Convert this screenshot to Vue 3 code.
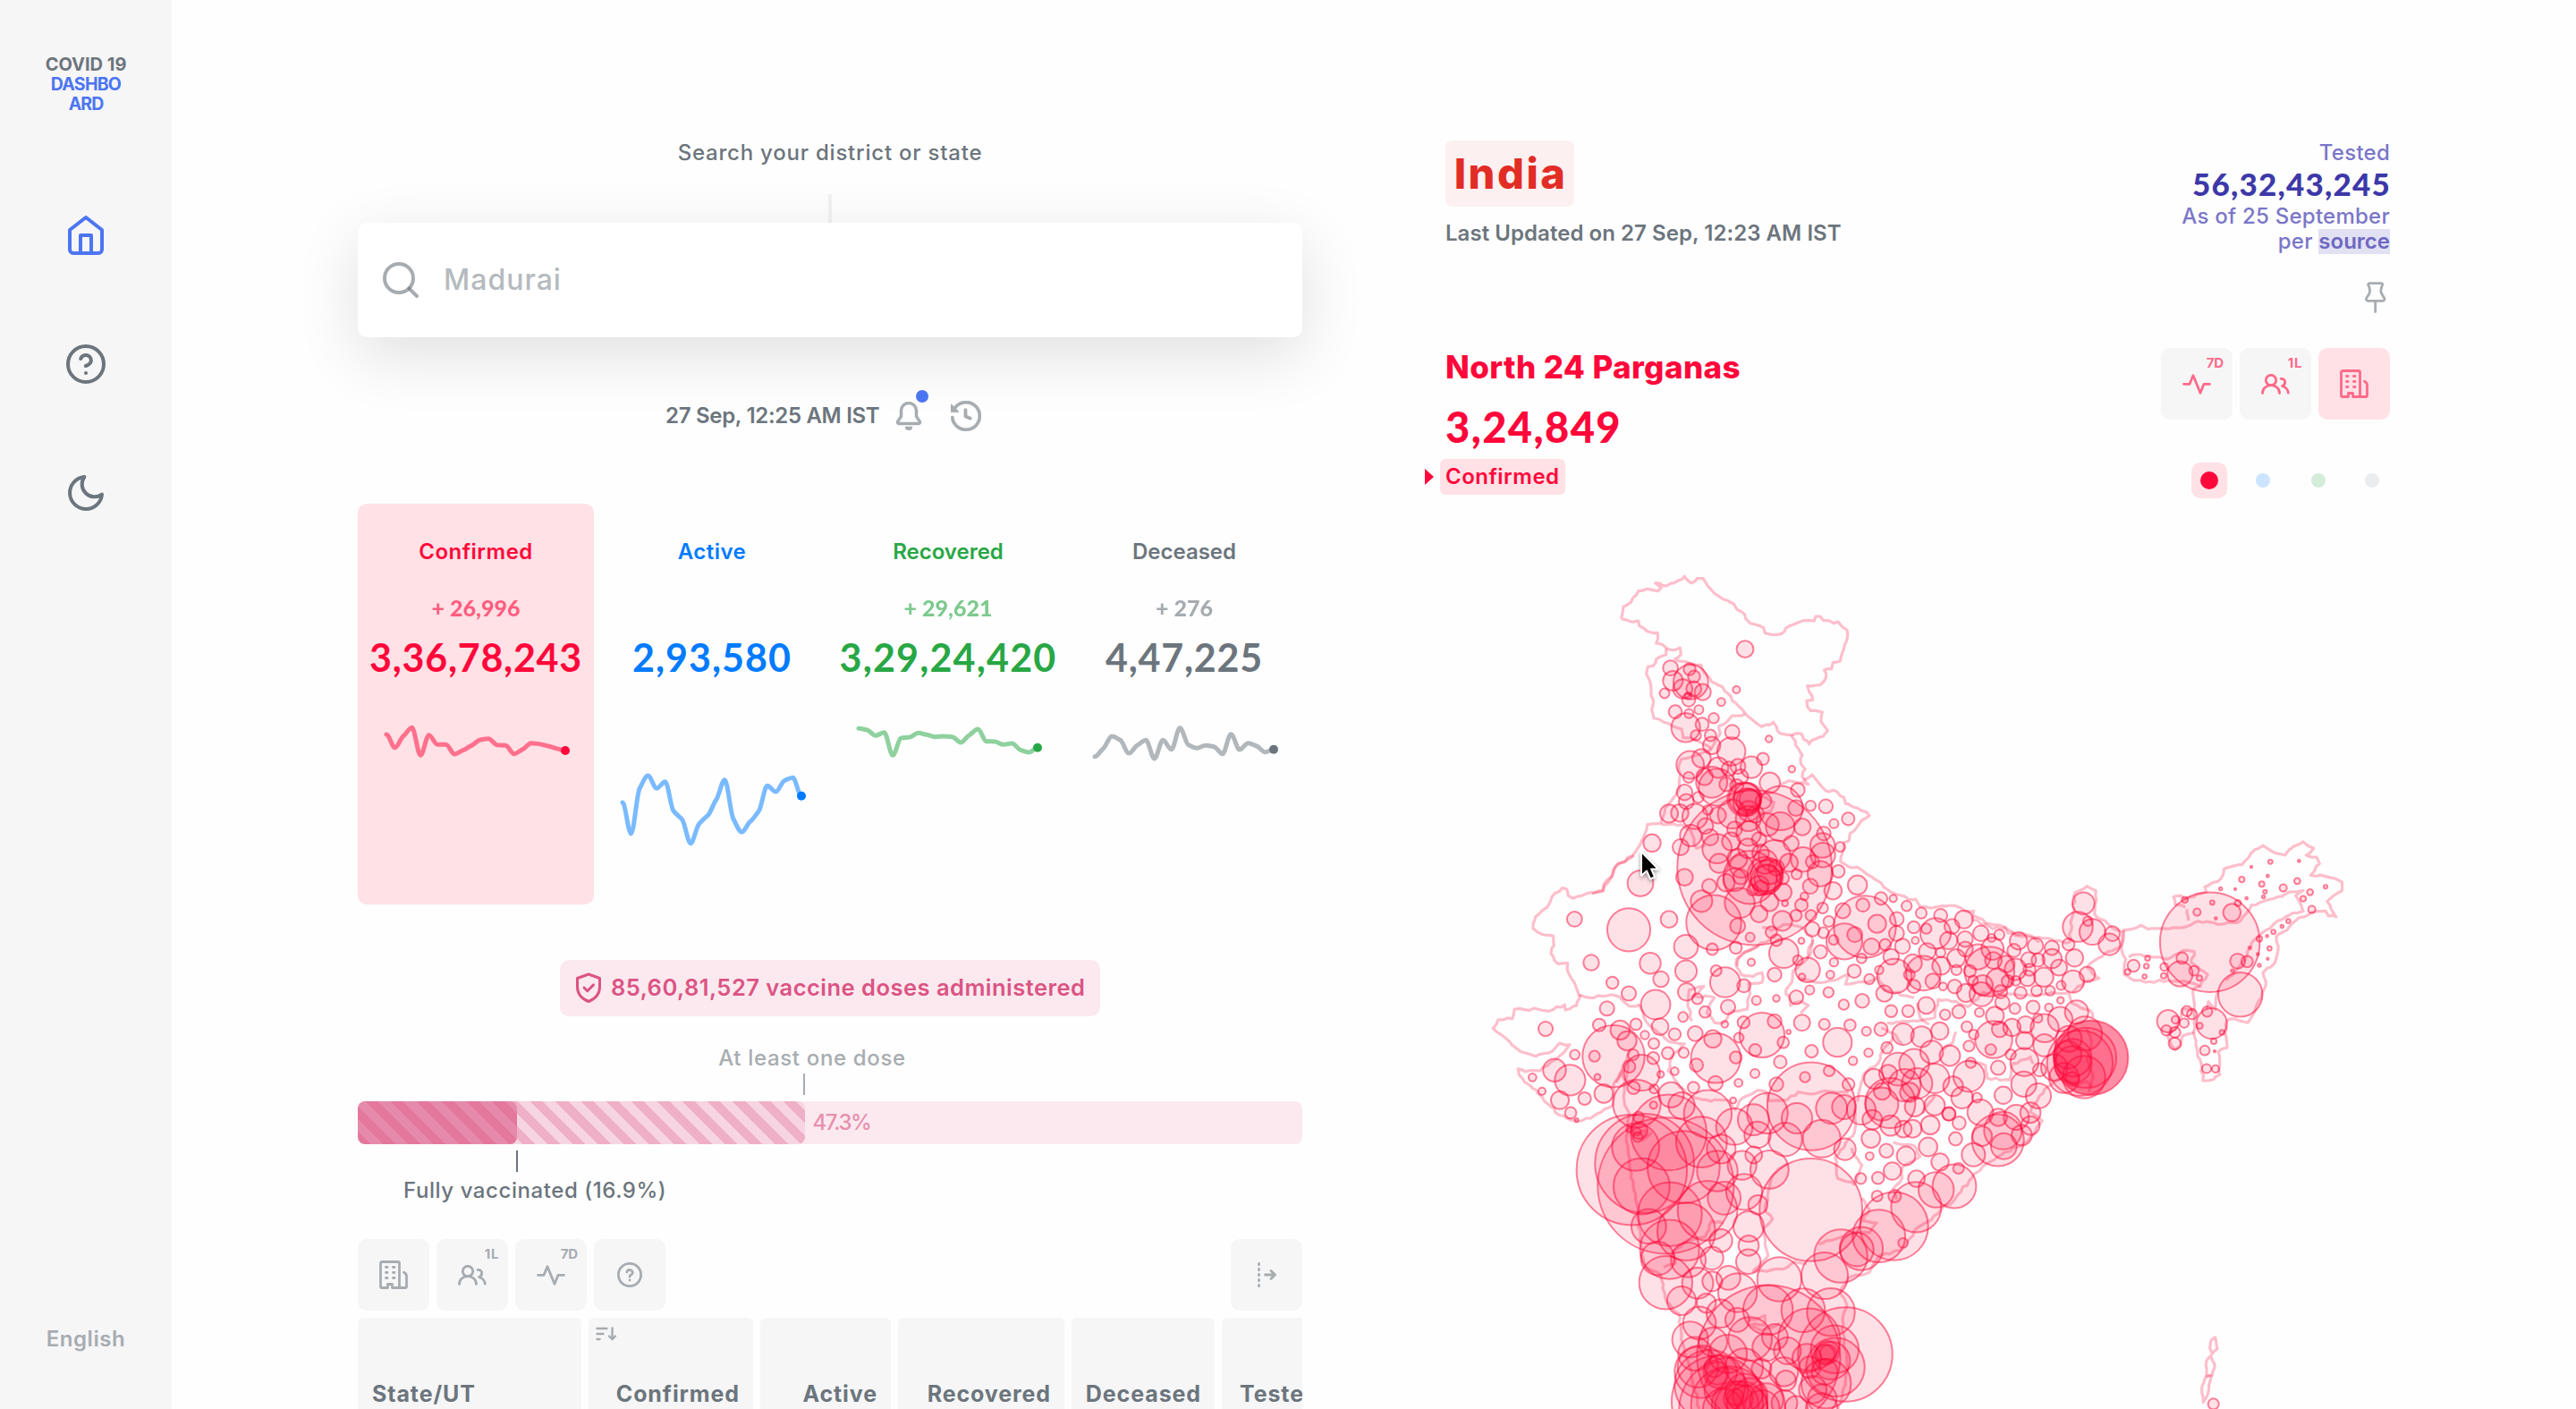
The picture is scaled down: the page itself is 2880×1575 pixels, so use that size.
<script setup>
const SPARK_STEP = 9.52

// Smooth curve through evenly spaced samples, flat at each sample's local extremes
function sparkPath(ys) {
  const n = ys.length
  const slope = ys.map((y, i) => {
    if (i === 0 || i === n - 1) return 0
    const a = y - ys[i - 1]
    const b = ys[i + 1] - y
    if (a * b <= 0) return 0
    return Math.sign(a) * Math.min(Math.abs(a), Math.abs(b), Math.abs(a + b) / 4) * 2 / 1.6
  })
  let d = `M32 ${(ys[0] / 3 - 240).toFixed(1)}`
  for (let i = 1; i < n; i++) {
    const x0 = 32 + (i - 1) * SPARK_STEP
    const x1 = 32 + i * SPARK_STEP
    const y0 = ys[i - 1] / 3 - 240
    const y1 = ys[i] / 3 - 240
    d += `C${(x0 + SPARK_STEP / 3).toFixed(1)} ${(y0 + slope[i - 1] / 9).toFixed(1)} ${(x1 - SPARK_STEP / 3).toFixed(1)} ${(y1 - slope[i] / 9).toFixed(1)} ${x1.toFixed(1)} ${y1.toFixed(1)}`
  }
  return d
}

const stats = [
  { key: 'confirmed', label: 'Confirmed', delta: '+ 26,996', total: '3,36,78,243',
    ys: [843, 887, 848, 820, 913, 845, 877, 877, 909, 896, 880, 861, 857, 878, 880, 908, 893, 872, 875, 882, 890, 897] },
  { key: 'active', label: 'Active', delta: '', total: '2,93,580',
    ys: [1071, 1176, 1025, 981, 1024, 1001, 1100, 1128, 1208, 1142, 1115, 1062, 995, 1125, 1170, 1135, 1100, 1015, 1035, 998, 988, 1049] },
  { key: 'recovered', label: 'Recovered', delta: '+ 29,621', total: '3,29,24,420',
    ys: [823, 828, 847, 836, 913, 855, 852, 838, 844, 851, 849, 851, 870, 845, 825, 866, 867, 877, 873, 895, 903, 887] },
  { key: 'deceased', label: 'Deceased', delta: '+ 276', total: '4,47,225',
    ys: [917, 890, 849, 862, 906, 879, 862, 924, 862, 893, 821, 878, 889, 880, 884, 908, 842, 894, 872, 882, 902, 893] }
].map((s) => ({ ...s, path: sparkPath(s.ys), endY: s.ys[21] / 3 - 240 }))

const columns = ['State/UT', 'Confirmed', 'Active', 'Recovered', 'Deceased', 'Tested']

// Map sheets: each has an origin and a vertical scale; bubbles are "x,y,r" and borders are point lists
const sheets = [
  {
    x: 1780, y: 620, k: 1 / 3,
    bubbles: '513,317,30 484,453,14 433,494,15 263,380,27 271,423,35 331,427,60 327,384,22 342,409,22 304,450,34 341,450,27 371,461,29 243,465,18 324,487,24 279,527,24 325,533,17 358,520,17 322,473,13 408,548,19 314,580,50 369,569,24 397,606,21 348,606,19 401,640,31 470,595,26 467,660,49 593,618,13 670,719,13 573,685,22 329,705,48 367,683,33 423,714,36 534,713,38 489,710,27 459,718,26 498,745,27 401,763,54 377,745,30 324,747,20 310,797,28 316,828,27 356,814,20 420,780,64 450,770,25 596,765,36 690,789,25 733,842,19 784,844,25 859,886,23 811,902,17 705,913,30 684,850,28 632,850,76 631,912,50 258,868,32 294,866,31 345,878,44 388,856,18 422,874,29 380,910,28 331,942,38 396,948,29 297,981,29 201,967,31 162,1102,45 123,1258,74 258,1223,30 310,1082,30 510,820,58 519,830,48 530,822,38 512,818,54 524,826,42 522,812,48 470,870,50 575,826,28 485,775,24 525,860,36 548,870,30 588,905,40 524,885,44 478,920,27 525,935,43 560,955,26 466,962,32 419,986,51 426,1035,34 487,1020,35 523,985,35 545,1050,261 668,968,27 612,1010,55 777,935,25 773,975,43 774,1007,43 832,980,18 708,1022,43 739,1030,24 826,1062,23 765,1070,44 660,1033,32 686,1072,19 732,1112,27 808,1127,31 890,1108,34 640,1132,31 712,1146,15 702,1175,23 647,1169,12 595,1165,32 560,1205,30 495,1168,52 449,1100,31 393,1112,26 367,1162,38 408,1234,94 488,1245,27 530,1283,17 482,1318,22 403,1323,21 315,1315,42 638,1228,35 684,1210,21 734,1210,20 773,1185,20 601,1266,21 618,1293,21 739,1256,26 776,1268,20 794,1230,20 702,1295,12 766,1332,24 643,1337,51 690,1360,18 841,1194,27 908,1175,24 915,1248,106 956,1238,32 881,1274,27 846,1297,62 810,1292,18 937,1314,29 983,1308,21 1021,1270,27 1022,1222,25 969,1153,23 1010,1153,14 1055,1178,19 1104,1202,20 904,1354,18 1041,1313,27 195,1370,37 580,1030,42 588,1085,46 560,1110,35 498,1080,27 530,1082,91 585,1080,57 580,1072,60 584,1090,52 596,1062,44 478,1090,40 538,1125,20 618,1050,28 640,1085,22 565,1000,30 500,1045,40 565,1118,26',
    borders: [
      '98,215 102,195 105,175 130,160 155,122 185,115 220,122 232,112 212,95 250,105 275,95 310,73 332,95 352,80 372,80 388,105 410,130 440,150 475,165 485,183 512,200 515,215 530,230 550,235 575,245 580,263 600,268 620,268 645,258 660,240 690,228 725,220 745,222 750,207 765,207 775,220 810,230 825,225 840,243 855,252 857,270 843,320 832,358 808,362 803,383 778,387 785,410 765,437 722,440 728,460 740,487 720,490 722,510 732,523 772,528 768,560 790,590 775,610 750,618 728,635 710,620 702,600 668,605 632,600 608,562 568,577 545,560 525,545 512,530 470,490 455,465 437,443 415,432 395,415 365,370 330,365 278,350 298,335 295,312 270,320 248,312 215,297 220,262 185,257 158,238 155,222 130,225 98,215',
      '248,315 248,335 215,350 205,373 188,375 182,400 192,420 198,460 205,500 200,520 207,548 240,562 270,575 300,585 305,615 345,620 400,650 430,600 425,575 445,567 470,540 512,535',
      '668,605 683,640 705,672 700,700 715,720 705,745 725,770 660,758 632,770',
      '710,755 738,738 760,765 785,793 810,790 845,815 850,835 890,850 930,875 865,935 862,960 845,965 833,1030 870,1050 890,1048 960,1095 1000,1130 1060,1155 1085,1155 1100,1180 1140,1185 1160,1180 1220,1178 1250,1195 1280,1195 1275,1225 1320,1240 1345,1255 1385,1250 1395,1270 1460,1275 1500,1300',
      '400,650 390,660 300,685 290,710 297,735 290,790 270,820 245,850 230,900 185,905 160,975 135,1010 85,1040 65,1080 40,1105 38,1128 0,1137',
      '230,903 300,905 330,925 350,985 380,975', '485,1380 490,1355 540,1320 600,1290',
      '570,1250 600,1260 650,1240 705,1250 740,1290 735,1330 720,1355', '560,800 610,830 600,860 560,870'
    ]
  },
  {
    x: 1640, y: 900, k: 675 / 1568,
    bubbles: '361,296,27 417,409,28 651,452,28 735,431,38 737,485,31 773,503,20 488,461,22 543,489,26 633,518,51 866,460,52 836,430,20 929,469,24 954,408,14 876,524,26 799,537,21 971,507,17 1038,502,13 1032,440,25 1143,428,43 1124,446,13 1105,499,25 1150,480,17 1213,486,19 1219,440,15 1231,408,16 1299,431,24 1350,452,19 1326,508,25 1264,518,19 470,528,26 444,571,23 264,581,26 514,584,34 537,612,34 567,569,21 648,575,30 597,597,16 725,550,18 627,619,20 697,595,22 766,593,27 865,569,13 825,607,31 835,657,85 928,564,22 990,597,77 1032,561,25 1079,589,9 912,604,18 1061,616,21 967,636,22 902,655,22 1124,565,29 1199,569,20 1285,571,21 1243,616,50 1340,587,17 1156,639,23 1347,643,16 1295,664,16 1051,667,23 674,644,22 727,643,19 770,675,24 492,652,106 428,652,20 362,648,18 438,706,12 558,648,20 545,679,22 587,695,62 625,657,22 650,699,13 697,691,15 834,722,26 911,721,15 966,697,17 294,688,40 346,714,53 220,707,15 252,743,14 312,766,32 395,762,23 348,799,21 459,749,33 368,818,8 559,734,23 570,775,82 628,737,17 626,779,14 685,752,44 760,733,21 893,767,12 720,780,46 808,802,82 1155,782,149 1134,706,19 1215,690,20 1038,725,25 1280,725,22 1008,800,70 961,817,54 897,835,63 975,856,46 1107,813,53 1068,868,58 1190,866,65 1223,787,54 1265,784,42 787,875,87 677,850,129 570,848,15 578,845,30 573,862,18 575,810,20 545,842,12 553,947,187 596,930,168 667,988,230 727,940,123 586,990,96 566,888,81 681,1062,109 667,1240,91 610,1094,60',
    borders: [
      '560,130 500,158 487,185 460,210 455,222 400,230 355,242 340,235 335,218 320,215 285,238 275,258 230,290 222,320 250,335 290,340 292,365 282,385 305,412 338,410 340,435 360,460 375,492 410,500 485,492 520,505 545,522 580,518',
      '380,492 368,520 330,532 328,518 275,535 240,530 160,530 152,555 105,557 88,580 130,605 180,640 230,652 285,640 310,618 345,622 300,660 245,690 195,692 172,685 175,700 220,735 270,775 310,805 350,818 385,820 440,800 490,780',
      '490,780 495,720 520,690 545,640 530,720 528,770 545,800 535,860 545,930 560,1000 575,1060 580,1130 600,1200 650,1220 670,1290 710,1320 725,1400 740,1440 780,1568',
      '980,365 935,380 905,400 905,420 920,440 960,445 990,435 990,460 945,462 950,490 940,530 880,540 860,565 830,565 805,540 830,500 760,495 795,470 745,480 740,520 755,560',
      '1160,350 1140,400 1095,430 1090,460 1070,480 1085,520 1120,510 1145,520 1120,540',
      '1120,450 1150,455 1200,460 1235,455 1280,440 1270,465 1340,460 1380,445 1400,480 1500,500',
      '580,518 600,560 640,590 680,615 730,620 690,650 675,690 705,720 740,750 790,765 880,768 900,790 925,760 975,740 1005,745 1010,768 1075,765 1110,745 1150,750 1200,742 1280,745',
      '1310,770 1330,700 1380,670 1400,630 1430,600',
      '1300,790 1300,850 1235,915 1245,970 1300,985 1325,935 1290,890',
      '1075,930 1045,945 1020,970 1000,1050 1025,1075 995,1100 1000,1140 1010,1170 960,1210 1060,1205 1100,1185 1140,1190',
      '1325,1020 1350,1050 1330,1080 1375,1085 1350,1110 1290,1110 1180,1140',
      '660,1200 700,1190 690,1160 740,1130 800,1120 820,1080 860,1085', '940,1340 1000,1325 1000,1350 950,1350 990,1365 1050,1345',
      '500,720 520,690 530,715', '560,850 600,845 590,870 620,850'
    ]
  },
  {
    x: 1840, y: 1200, k: 1 / 3,
    bubbles: '240,327,70 253,253,50 323,308,50 362,273,30 415,322,66 554,457,174 330,397,62 263,418,57 376,440,34 345,513,53 345,577,36 344,631,43 252,560,40 222,619,40 207,460,102 136,530,99 80,590,101 143,625,60 40,620,58 120,762,50 174,703,54 223,697,35 277,685,42 308,735,67 203,770,34 180,837,57 251,805,49 307,826,42 149,892,62 412,950,242 410,793,85 528,794,75 448,690,76 600,678,80 654,612,91 621,800,82 669,942,160 548,892,106 634,925,82 636,985,100 622,963,65 610,935,40 600,943,35 612,938,30 540,955,50 605,1040,85 592,1090,50 550,985,38 600,1000,45 475,930,47 433,883,45 404,918,48 350,890,75 225,900,50 275,940,66 330,985,65 185,1000,90 175,985,70 165,940,58 250,1000,58 230,985,35 388,990,35 463,1000,50 470,1030,36 560,1060,48 465,1105,45 405,1095,58 240,1100,155 280,1110,130 290,1130,180 270,1060,75 310,1090,50 300,1085,30 215,1045,120 330,1070,65 350,1080,60 390,1120,60 505,1120,40 590,1125,55 320,1120,90 300,1110,80 260,1125,70 340,1115,70 240,1005,40 708,590,58 723,587,74 782,545,90 833,512,116 863,568,18 907,448,86 974,390,61 1035,378,75 1049,318,20 908,353,30 835,411,23 776,411,20 721,352,20 779,350,22 827,327,31 751,277,15 807,259,25 873,276,33 947,246,33 755,218,33 987,297,31 1039,219,24 954,173,33 1051,166,24 1017,135,24 668,254,38',
    borders: []
  },
  {
    x: 2040, y: 950, k: 625 / 1568,
    bubbles: '389,184,24 467,195,32 299,217,22 341,221,19 372,234,53 427,215,27 416,254,31 304,254,14 471,250,28 344,285,30 389,288,18 441,304,32 472,278,27 524,234,28 560,247,15 586,238,19 563,277,39 650,255,31 635,282,24 707,269,28 762,275,26 684,308,27 716,309,24 763,305,34 786,330,29 818,265,22 838,303,31 833,369,39 881,349,28 735,357,34 687,336,22 640,335,38 566,310,30 553,341,85 514,300,44 487,340,22 442,337,19 391,325,32 331,346,60 296,318,32 284,350,20 363,368,27 234,354,60 223,300,28 299,383,24 200,403,29 436,383,25 397,383,15 474,401,32 498,366,18 530,380,36 526,405,42 580,365,40 590,398,24 614,368,22 609,320,30 657,401,22 641,367,18 680,360,28 711,395,20 756,395,18 793,380,17 791,422,13 752,442,15 699,441,24 638,445,20 596,428,26 571,465,32 519,456,17 450,454,24 404,462,19 341,436,30 280,452,22 223,452,22 183,337,16 189,503,24 209,555,21 263,517,38 325,524,37 386,508,31 359,567,40 420,577,36 477,496,20 500,518,18 484,550,20 567,532,64 587,503,28 628,498,31 557,560,20 624,574,19 674,490,30 671,535,31 715,472,17 738,500,49 790,475,43 845,455,41 670,595,49 737,548,39 490,597,19 582,611,26 247,615,57 300,600,52 213,628,32 165,642,35 310,655,53 369,641,51 484,635,54 431,663,35 193,677,30 192,713,57 220,710,86 268,660,56 123,730,50 285,680,34 302,720,35 369,716,36 461,695,38 511,695,18 416,741,24 160,757,35 221,773,36 264,783,30 295,782,32 668,657,44 717,690,44 522,736,45 599,688,31 581,814,89 598,787,65 582,750,31 601,831,45 528,803,35 643,750,44 690,737,36 690,773,33 661,800,36 499,855,41 721,617,24 856,598,112 877,583,103 832,583,65 819,530,45 873,515,59 833,602,64 870,637,73 803,640,52 830,642,25 770,610,46 815,575,48 868,150,39 849,216,52 883,200,18 898,230,45 965,235,27 955,265,38',
    borders: [
      '60,1320 75,1280 50,1240 80,1200 150,1185 180,1140 260,1120 310,1060 380,1020 440,975 500,910 580,860 660,830 700,800 730,760 690,735 720,690 770,650 800,640 850,660 880,650 895,665',
      '60,1320 65,1380 75,1440 70,1500 45,1568', '210,485 310,480 370,470 380,420 440,425 480,440 530,400 700,410',
      '310,430 320,470 350,490', '440,510 430,540 400,560', '480,590 540,605 545,640 620,645 630,600 690,580 700,600',
      '230,820 300,830 320,860 260,890 260,920 230,950 240,980', '190,500 240,520 260,545', '370,690 350,710 330,740',
      '700,410 760,400 820,400 830,430 890,450 900,470', '880,500 895,545 880,590 900,640 885,680',
      '500,185 540,205 600,215 640,240 720,245 760,250 820,260 830,190 840,120 880,102 910,115 905,180 960,215 1000,230 995,270 940,290 880,330 920,360 870,370 830,400'
    ]
  },
  {
    x: 2280, y: 900, k: 675 / 1568,
    bubbles: '316,417,22 363,398,10 359,418,10 353,445,9 296,433,11 572,356,169 488,246,12 529,278,14 580,253,9 592,294,6 646,279,31 666,254,12 695,242,6 608,217,7 657,218,5 679,193,11 711,160,5 775,147,9 871,145,6 766,184,6 746,205,11 757,225,8 752,238,7 818,215,14 865,197,12 885,243,11 908,226,12 960,212,8 914,271,14 835,301,9 814,315,7 785,329,9 764,340,6 772,372,9 738,347,11 705,370,6 733,387,6 766,399,4 738,416,7 648,430,7 665,405,27 697,406,21 674,492,76 472,438,44 479,397,21 519,430,18 537,449,11 419,420,15 417,443,11 432,561,39 457,557,15 426,585,19 455,590,20 454,619,22 486,566,17 495,535,19 512,543,19 578,567,53 563,536,19 538,573,12 613,590,10 585,613,11 555,637,18 588,639,5 561,684,17 591,685,14 584,1555,20',
    borders: [
      '280,325 310,322 340,312 365,322 410,320 480,318 520,305 560,302 600,310 650,305 675,300 690,285 710,260 750,250 800,238 850,225 885,222 860,235 880,265 885,275 850,280 800,300 760,325 720,350 690,400 650,440 625,455',
      '490,265 455,258 450,238 475,235 490,245 560,225 555,212 610,190 620,165 680,155 710,125 750,105 780,120 825,130 840,115 885,95 900,105 920,112 895,130 930,135 940,152 910,182 960,185 990,190 1015,200 1015,222 965,250 995,290 970,288 960,275 910,280 860,300 830,325 795,340 800,380 790,410 750,435 760,465 745,500 700,565 640,555 625,570 630,630 600,640 605,700 585,712 548,715 545,680 530,640 520,600 520,540 515,480 540,470',
      '283,325 275,370 290,400 285,440 320,455 370,458 430,455 500,460 540,470 565,440 530,420 510,410 520,380 480,378 430,400 380,395 340,388 300,395',
      '495,270 500,300', '520,530 480,530 465,570 430,600 455,635 475,625 480,600 520,590', '560,530 567,510 590,530 600,480',
      '575,1390 590,1382 597,1412 580,1425 572,1410 575,1390', '562,1440 575,1430 587,1450 580,1480 560,1482 562,1440', '545,1510 555,1490 577,1482 565,1530 550,1550 545,1525 545,1510'
    ]
  }
]

const MAP_X = 1616
const MAP_Y = 620
const parse = (s) => s.split(' ').map((p) => p.split(',').map(Number))

let seed = 7
const rand = () => {
  seed = (seed * 16807) % 2147483647
  return seed / 2147483647 - 0.5
}

// Coast and state lines get small deterministic wiggles between their vertices
function border(points) {
  let d = ''
  points.forEach(([x, y], i) => {
    if (i) {
      const [px, py] = points[i - 1]
      const len = Math.hypot(x - px, y - py)
      const steps = Math.max(1, Math.round(len / 5))
      for (let k = 1; k < steps; k++) {
        d += `L${(px + ((x - px) * k) / steps + rand() * 2.6).toFixed(1)} ${(py + ((y - py) * k) / steps + rand() * 2.6).toFixed(1)}`
      }
    }
    d += `${i ? 'L' : 'M'}${x.toFixed(1)} ${y.toFixed(1)}`
  })
  return d
}

const bubbles = sheets.flatMap((s) => parse(s.bubbles).map(([x, y, r]) => ({ x: s.x - MAP_X + x / 3, y: s.y - MAP_Y + y * s.k, r: r / 3 })))
const borders = sheets.flatMap((s) => s.borders.map((b) => border(parse(b).map(([x, y]) => [s.x - MAP_X + x / 3, s.y - MAP_Y + y * s.k]))))
const hovered = { x: 2040 - MAP_X + 893 / 3, y: 950 - MAP_Y + 583 * 0.3986, r: 125 / 3 }
</script>

<template>
  <div class="page">
    <nav class="sidebar">
      <div class="brand">
        <span>COVID 19</span>
        <span class="brand-blue b1">DASHBO</span>
        <span class="brand-blue b2">ARD</span>
      </div>
      <div class="nav-icons">
        <svg class="feather blue" viewBox="0 0 24 24"><path d="M3 9l9-7 9 7v11a2 2 0 0 1-2 2H5a2 2 0 0 1-2-2z" /><path d="M9 22V12h6v10" /></svg>
        <svg class="feather" viewBox="0 0 24 24"><circle cx="12" cy="12" r="10" /><path d="M9.09 9a3 3 0 0 1 5.83 1c0 2-3 3-3 3M12 17h.01" /></svg>
        <svg class="feather" viewBox="0 0 24 24"><path d="M21 12.79A9 9 0 1 1 11.21 3 7 7 0 0 0 21 12.79z" /></svg>
      </div>
      <span class="language">English</span>
    </nav>

    <main class="left">
      <label class="search-label">Search your district or state</label>
      <div class="stem"></div>
      <div class="search">
        <svg class="feather search-icon" viewBox="0 0 24 24"><circle cx="11" cy="11" r="8" /><path d="M21 21l-4.35-4.35" /></svg>
        <span>Madurai</span>
      </div>

      <div class="clock">
        <span class="time">27 Sep, 12:25 AM IST</span>
        <span class="bell">
          <svg width="32" height="32" viewBox="0 0 16 16" fill-rule="evenodd" stroke="currentColor" stroke-width=".25"><path d="M8 16a2 2 0 001.985-1.75c.017-.137-.097-.25-.235-.25h-3.5c-.138 0-.252.113-.235.25A2 2 0 008 16zM3 5a5 5 0 0110 0v2.947c0 .05.015.098.042.139l1.703 2.555A1.518 1.518 0 0113.482 13H2.518a1.518 1.518 0 01-1.263-2.36l1.703-2.554A.25.25 0 003 7.947V5zm5-3.5A3.5 3.5 0 004.5 5v2.947c0 .346-.102.683-.294.97l-1.703 2.556a.018.018 0 00.015.027h10.964a.018.018 0 00.015-.027l-1.703-2.556a1.75 1.75 0 01-.294-.97V5A3.5 3.5 0 008 1.5z" /></svg>
          <i class="bell-dot"></i>
        </span>
        <svg class="history" width="34" height="34" viewBox="0 0 16 16" stroke="currentColor" stroke-width=".3"><path d="M1.643 3.143L.427 1.927A.25.25 0 000 2.104V5.75c0 .138.112.25.25.25h3.646a.25.25 0 00.177-.427L2.715 4.215a6.5 6.5 0 11-1.18 4.458.75.75 0 10-1.493.154 8.001 8.001 0 101.6-5.684zM7.75 4a.75.75 0 01.75.75v2.992l2.028.812a.75.75 0 01-.557 1.392l-2.5-1A.75.75 0 017 8.25v-3.5A.75.75 0 017.75 4z" /></svg>
      </div>

      <section class="stats">
        <div v-for="s in stats" :key="s.key" class="stat" :class="s.key">
          <h5>{{ s.label }}</h5>
          <h4>{{ s.delta }}</h4>
          <h1>{{ s.total }}</h1>
          <svg width="264" height="200" viewBox="0 0 264 200">
            <path :d="s.path" fill="none" stroke="currentColor" stroke-opacity=".52" stroke-width="5" stroke-linejoin="round" stroke-linecap="round" />
            <circle cx="232" :cy="s.endY" r="5" fill="currentColor" />
          </svg>
        </div>
      </section>

      <div class="pill">
        <svg width="30" height="34" viewBox="0 0 30 34" fill="none" stroke="currentColor" stroke-width="3" stroke-linejoin="round" stroke-linecap="round"><path d="M15 2L27.500 6.500V16C27.500 24 22.500 29.500 15 32.500C7.500 29.500 2.500 24 2.500 16V6.500Z" /><path d="M10 17l3.700 3.700 6.800-6.800" /></svg>
        <span>85,60,81,527 vaccine doses administered</span>
      </div>

      <div class="one-dose"><span>At least one dose</span><i></i></div>
      <div class="progress">
        <div class="striped full"></div>
        <div class="striped partial"></div>
        <span>47.3%</span>
      </div>
      <div class="fully"><i></i><span>Fully vaccinated (16.9%)</span></div>

      <div class="toolbar">
        <button><svg class="glyph" width="32" height="32" viewBox="0 0 32 32"><path d="M22.500 30.500H14.500V26.500H9.500V30.500H3A1.500 1.500 0 0 1 1.500 29V3A1.500 1.500 0 0 1 3 1.500H21A1.500 1.500 0 0 1 22.500 3V30.500H29A1.500 1.500 0 0 0 30.500 29V17.500C30.500 15.500 29.500 14.200 27.500 13.200M7.500 7.500h1.500M15.500 7.500h1.500M7.500 13.500h1.500M15.500 13.500h1.500M7.500 19.500h1.500M15.500 19.500h1.500" /></svg></button>
        <button><svg class="glyph" width="32" height="23" viewBox="0 0 32 23"><circle cx="11" cy="7" r="5.700" /><path d="M1.500 21.500C1.500 16 6 12.700 11 12.700S20.500 16 20.500 21.500M22 5.300C25 5.200 26.700 7 26.700 9.200C26.700 11.300 25.500 12.700 23.500 13.500C27 14.500 29.800 17.500 30.300 21" /></svg><sup class="s1">1L</sup></button>
        <button><svg class="glyph" width="32" height="23" viewBox="0 0 32 23"><path d="M1.500 11.300H8L12 1.700 20 21.300 24 11.300H30.500" /></svg><sup>7D</sup></button>
        <button><svg class="glyph" width="28" height="28" viewBox="0 0 28 28"><circle cx="14" cy="14" r="12.600" /><path d="M10.800 11a3.300 3.300 0 0 1 6.500 .8c0 2-3.300 2.300-3.300 4.200M14 20h.02" /></svg></button>
        <button class="expand"><svg class="glyph" width="32" height="28" viewBox="0 0 32 28"><path d="M7.500 1.500v1.200M7.500 7.500v1.200M7.500 13.500v1.200M7.500 19.500v1.200M7.500 25.500v1.200M14.500 14h11M21 9.500l4.500 4.500-4.500 4.500" /></svg></button>
      </div>

      <div class="table-head">
        <div v-for="(c, i) in columns" :key="c" class="cell" :class="'c' + i">
          <svg v-if="i === 1" class="glyph sort" width="24" height="16" viewBox="0 0 24 16"><path d="M1.500 2h11M1.500 8h7M1.500 14h3M18.500 1.500v12M15 10.500l3.500 3.700 3.500-3.700" /></svg>
          <span>{{ c }}</span>
        </div>
      </div>
    </main>

    <aside class="right">
      <header>
        <div>
          <h1 class="country">India</h1>
          <p class="updated">Last Updated on 27 Sep, 12:23 AM IST</p>
        </div>
        <div class="tested">
          <span>Tested</span>
          <strong>56,32,43,245</strong>
          <span>As of 25 September</span>
          <span class="per">per <a>source</a></span>
        </div>
      </header>
      <div class="pin-row">
        <svg width="24" height="35" viewBox="0 0 24 35" fill="none" stroke="currentColor" stroke-width="2.800" stroke-linecap="round" stroke-linejoin="round"><path d="M5 1.700H18.300C19.600 1.700 20.200 3 19.400 4C17.500 7.500 17.300 10.500 18.800 13.500L21.700 18.300C22.300 19.800 21.600 21.300 20 21.300H3.500C1.800 21.300 1 19.800 1.800 18.300L4.700 13.500C6 10.500 5.800 7.500 4 4C3.200 3 3.700 1.700 5 1.700ZM11.700 21.300V33.500" /></svg>
      </div>
      <div class="map-head">
        <div class="district">
          <h2>North 24 Parganas</h2>
          <h1>3,24,849</h1>
          <div class="kind"><i></i><span>Confirmed</span></div>
        </div>
        <div class="switches">
          <div class="toolbar red">
            <button><svg class="glyph" width="32" height="23" viewBox="0 0 32 23"><path d="M1.500 11.300H8L12 1.700 20 21.300 24 11.300H30.500" /></svg><sup>7D</sup></button>
            <button><svg class="glyph" width="32" height="23" viewBox="0 0 32 23"><circle cx="11" cy="7" r="5.700" /><path d="M1.500 21.500C1.500 16 6 12.700 11 12.700S20.500 16 20.500 21.500M22 5.300C25 5.200 26.700 7 26.700 9.200C26.700 11.300 25.500 12.700 23.500 13.500C27 14.500 29.800 17.500 30.300 21" /></svg><sup class="s1">1L</sup></button>
            <button class="on"><svg class="glyph" width="32" height="32" viewBox="0 0 32 32"><path d="M22.500 30.500H14.500V26.500H9.500V30.500H3A1.500 1.500 0 0 1 1.500 29V3A1.500 1.500 0 0 1 3 1.500H21A1.500 1.500 0 0 1 22.500 3V30.500H29A1.500 1.500 0 0 0 30.500 29V17.500C30.500 15.500 29.500 14.200 27.500 13.200M7.500 7.500h1.500M15.500 7.500h1.500M7.500 13.500h1.500M15.500 13.500h1.500M7.500 19.500h1.500M15.500 19.500h1.500" /></svg></button>
          </div>
          <div class="dots"><b><i class="d1"></i></b><i class="d2"></i><i class="d3"></i><i class="d4"></i></div>
        </div>
      </div>
      <svg class="map" width="1056" height="955" viewBox="0 0 1056 955">
        <g fill="none" stroke="#ff073a" stroke-opacity=".26" stroke-width="3.200" stroke-linejoin="round"><path v-for="(d, i) in borders" :key="i" :d="d" /></g>
        <g fill="#ff073a" fill-opacity=".118" stroke="#ff073a" stroke-opacity=".5" stroke-width="2">
          <circle :cx="hovered.x" :cy="hovered.y" :r="hovered.r" fill-opacity=".45" />
          <circle v-for="(b, i) in bubbles" :key="i" :cx="b.x" :cy="b.y" :r="Math.max(b.r - 0.6, 1.2)" />
        </g>
      </svg>
    </aside>

    <svg class="cursor" width="26" height="40" viewBox="0 0 26 40"><path d="M2 2V29L8 23.500L12 32.500L17 30.300L13.200 21.500H21Z" fill="#000" stroke="#fff" stroke-width="2" stroke-linejoin="round" /></svg>
  </div>
</template>

<style>
html, body { margin: 0; background: #fff; }
body { overflow: hidden; }
</style>

<style scoped>
.page { position: relative; display: flex; width: 2880px; height: 1575px; overflow: hidden; background: #fefefe; color: #6c757d; font-family: Inter, "Noto Sans", sans-serif; font-size: 24px; font-weight: 600; line-height: 30px; white-space: nowrap; }
h1, h2, h4, h5, p { margin: 0; font-weight: inherit; font-size: inherit; }
svg { display: block; flex: none; }
i { display: block; }

.sidebar { display: flex; flex-direction: column; align-items: center; width: 192px; height: 1575px; box-sizing: border-box; padding-top: 61px; background: #f6f6f7; flex: none; }
.brand { display: flex; flex-direction: column; align-items: center; font-size: 20px; line-height: 22px; font-weight: 700; }
.brand-blue { color: #4c75f2; }
.b1 { font-size: 19.5px; letter-spacing: -.75px; }
.b2 { font-size: 19.5px; letter-spacing: -1px; }
.nav-icons { display: flex; flex-direction: column; gap: 96px; margin-top: 112px; }
.feather { width: 48px; height: 48px; fill: none; stroke: #6c757d; stroke-width: 2; stroke-linecap: round; stroke-linejoin: round; }
.blue { stroke: #4c75f2; }
.language { margin-top: auto; margin-bottom: 63px; color: #a7acb1; letter-spacing: .56px; }

.left { width: 1056px; margin-left: 208px; display: flex; flex-direction: column; flex: none; }
.search-label { margin-top: 156px; text-align: center; letter-spacing: .78px; font-weight: 500; }
.stem { width: 4px; height: 32px; margin: 31px auto 0; background: #f1f1f2; }
.search { display: flex; align-items: center; gap: 24px; height: 128px; box-sizing: border-box; padding-left: 24px; border-radius: 10px; background: #fff; box-shadow: 0 20px 70px rgba(0, 0, 0, .12); }
.search-icon { stroke-opacity: .6; }
.search span { font-size: 32px; font-weight: 500; line-height: 40px; color: #b5babe; letter-spacing: 1px; }
.clock { display: flex; align-items: center; height: 40px; margin-top: 68px; padding-left: 344px; color: #a7acb1; fill: #a7acb1; }
.time { width: 239px; color: #6c757d; letter-spacing: -.3px; }
.bell { position: relative; margin-left: 17px; }
.bell-dot { position: absolute; left: 24px; top: -13px; width: 14px; height: 14px; border-radius: 50%; background: #4c75f2; }
.history { margin-left: 31px; }

.stats { display: flex; margin-top: 78px; }
.stat { width: 264px; height: 448px; border-radius: 10px; text-align: center; }
.stat h5 { margin-top: 39px; line-height: 30px; }
.stat h4 { height: 30px; margin-top: 32px; font: 900 25px/30px Lato, sans-serif; opacity: .6; }
.stat h1 { margin-top: 18px; font: 700 43px/46px Lato, sans-serif; }
.stat svg { margin-top: 22px; }
.confirmed { background: #ffe1e6; color: #ff073a; }
.confirmed h5 { letter-spacing: .47px; }
.confirmed h1 { letter-spacing: .75px; }
.active { color: #007bff; }
.active h5 { letter-spacing: .47px; }
.active h1 { letter-spacing: 1.05px; }
.recovered { color: #28a745; }
.recovered h1 { letter-spacing: 1.2px; }
.deceased { color: #6c757d; }
.deceased h1 { letter-spacing: .8px; }

.pill { display: flex; align-items: center; align-self: center; gap: 10px; width: 604px; height: 64px; box-sizing: border-box; margin-top: 62px; padding-left: 17px; border-radius: 10px; background: #fbe9ef; color: #db5484; font-size: 25.5px; font-weight: 600; letter-spacing: .48px; }
.one-dose { display: flex; flex-direction: column; align-items: center; width: 209px; margin: 32px 0 0 403.500px; padding-right: 18px; color: #a7acb1; font-weight: 500; letter-spacing: .67px; }
.one-dose i { width: 2px; height: 24px; margin: 2px 0 0 -18px; background: #a7acb1; }
.progress { display: flex; align-items: center; height: 48px; margin-top: 7px; border-radius: 8px; overflow: hidden; background: #fbe9ef; color: #e88fae; font-weight: 500; }
.progress span { margin-left: 9px; letter-spacing: -1.4px; }
.striped { height: 48px; flex: none; }
.full { position: relative; width: 178px; border-radius: 0 8px 8px 0; background: repeating-linear-gradient(45deg, #e3789c 0 10px, #e68aab 10px 20px); }
.partial { width: 329.500px; margin-left: -8px; border-radius: 0 8px 8px 0; background: repeating-linear-gradient(45deg, #f7d4e1 0 10px, #efafc6 10px 20px); }
.fully { display: flex; flex-direction: column; align-items: flex-start; margin-top: 7px; font-weight: 500; }
.fully i { width: 2px; height: 24px; margin-left: 177px; background: #6c757d; }
.fully span { margin: 6px 0 0 51px; letter-spacing: .57px; }

.toolbar { display: flex; gap: 8px; margin-top: 39px; color: #a7acb1; }
.toolbar button { position: relative; display: flex; align-items: center; justify-content: center; width: 80px; height: 80px; padding: 0; border: 0; border-radius: 10px; background: #f6f6f7; color: inherit; flex: none; }
.toolbar sup { position: absolute; right: 10px; top: 7px; font: 700 15px/20px Inter, sans-serif; letter-spacing: -.2px; }
.toolbar .s1 { letter-spacing: .6px; }
.toolbar .expand { margin-left: auto; }
.glyph { fill: none; stroke: currentColor; stroke-width: 2.800; stroke-linecap: round; stroke-linejoin: round; }
.table-head { display: flex; gap: 8px; height: 102px; margin-top: 8px; overflow: hidden; font-size: 25px; font-weight: 700; letter-spacing: .9px; }
.cell { position: relative; display: flex; align-items: flex-end; justify-content: flex-end; height: 120px; box-sizing: border-box; padding: 0 15px 20px 16px; border-radius: 6px; background: #f6f6f7; flex: none; }
.cell span { line-height: 30px; }
.sort { position: absolute; left: 8px; top: 10px; color: #a7acb1; stroke-width: 2.400; }
.c0 { width: 250px; justify-content: flex-start; }
.c1 { width: 184px; }
.c2 { width: 146px; }
.c3 { width: 186px; }
.c4 { width: 160px; }
.c5 { width: 120px; justify-content: flex-start; padding-left: 20px; }

.right { width: 1056px; margin-left: 160px; display: flex; flex-direction: column; flex: none; }
header { display: flex; justify-content: space-between; height: 128px; margin-top: 157px; }
.country { width: 144px; height: 74px; border-radius: 8px; background: #fdf0f0; color: #e12d26; text-align: center; font-size: 47px; line-height: 74px; font-weight: 800; letter-spacing: 2.500px; text-indent: 2px; }
.updated { margin-top: 15px; letter-spacing: .05px; }
.tested { display: flex; flex-direction: column; align-items: flex-end; color: #7b76c8; font-weight: 500; line-height: 28px; letter-spacing: .25px; }
.tested strong { font: 900 35px/40px Lato, sans-serif; letter-spacing: 1.2px; color: #3d38a8; margin: 0 -1px 3px; }
.tested a { display: inline-block; background: #e2e0f3; color: #6d68c1; font-weight: 600; letter-spacing: 0; }
.pin-row { display: flex; justify-content: flex-end; margin-top: 30px; padding-right: 4px; color: #a7acb1; }
.map-head { display: flex; justify-content: space-between; height: 168px; margin-top: 39px; color: #ff073a; }
.district h2 { font-size: 35px; font-weight: 800; line-height: 42px; letter-spacing: .4px; }
.district h1 { margin-top: 20px; font: 900 47px/52px Lato, sans-serif; letter-spacing: 1.4px; }
.kind { display: flex; align-items: center; gap: 7px; margin: 10px 0 0 -23px; }
.kind i { border-left: 10px solid #ff073a; border-top: 9px solid transparent; border-bottom: 9px solid transparent; }
.kind span { width: 140px; height: 40px; box-sizing: border-box; padding-left: 6px; border-radius: 6px; background: #ffe1e6; line-height: 40px; letter-spacing: .47px; }
.red { margin: 0; color: #ff6a89; }
.toolbar .on { background: #ffe1e6; }
.dots { display: flex; align-items: center; margin-top: 48px; padding-left: 34px; }
.dots b { display: flex; align-items: center; justify-content: center; width: 40px; height: 40px; border-radius: 10px; background: #ffe1e6; }
.dots i { width: 16px; height: 16px; border-radius: 50%; }
.dots .d1 { width: 20px; height: 20px; background: #ff073a; }
.d2 { margin-left: 32px; background: #cce4ff; }
.d3 { margin-left: 46px; background: #d4eddb; }
.d4 { margin-left: 44px; background: #ebecee; }
.map { margin-top: 63px; }
.cursor { position: absolute; left: 1833px; top: 950px; filter: drop-shadow(0 2px 2px rgba(0, 0, 0, .4)); }
</style>
